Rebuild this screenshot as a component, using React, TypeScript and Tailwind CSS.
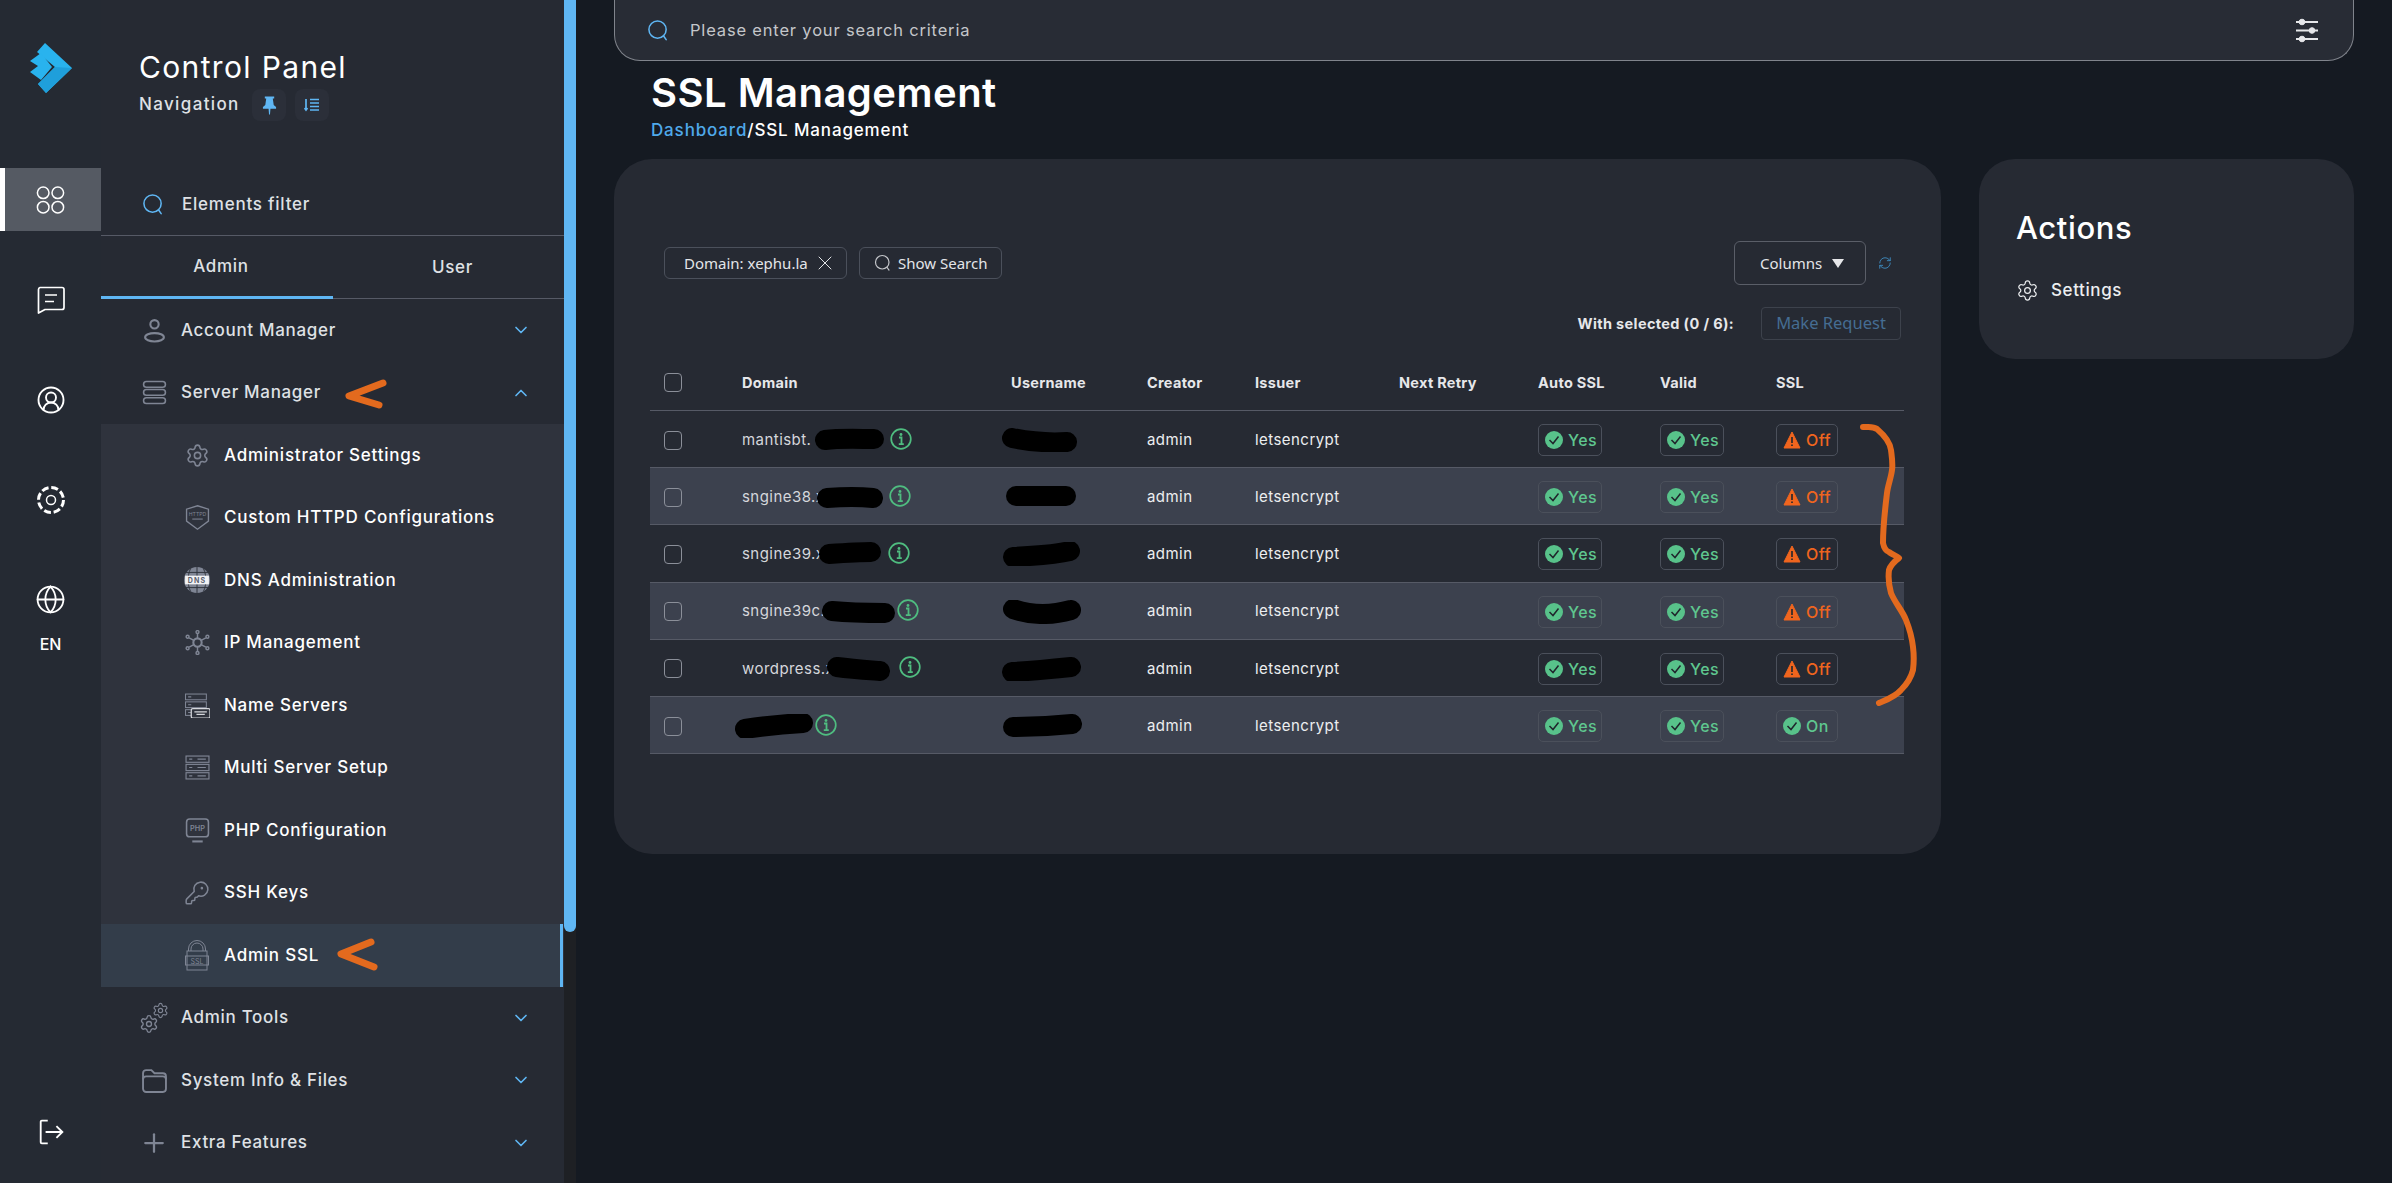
import { ChevronDown, ChevronUp, CircleUserRound, Globe, KeyRound, Plus, RefreshCw, Settings, X } from 'lucide-react'
import type { ReactNode } from 'react'

const SearchGlyph = ({ className }: { className: string }) => (
  <svg viewBox="0 0 24 24" fill="none" stroke="currentColor" strokeWidth="1.6" className={className}>
    <circle cx="11" cy="11" r="9" />
    <path d="M17.5 18l2.5 3.5" strokeLinecap="round" />
  </svg>
)

const Logo = () => (
  <svg viewBox="0 0 42 50" className="h-[50px] w-[42px]">
    <path d="M15 0L42 25L16 50L8 41L25 24L7 9z" fill="#29b3ee" />
    <path d="M25 24L42 25L39 28L16 50L8 41z" fill="#1f9fdb" />
    <path d="M0 18L11 10L22 24L11 37L0 29L8 23z" fill="#29b3ee" />
  </svg>
)

const svgProps = {
  viewBox: '0 0 24 24',
  fill: 'none',
  stroke: 'currentColor',
  strokeWidth: 1.3,
  className: 'h-[25px] w-[25px]',
}

const icons: Record<string, ReactNode> = {
  account: (
    <svg {...svgProps} strokeWidth={2}>
      <circle cx="12" cy="6" r="4" />
      <ellipse cx="12" cy="18.5" rx="9" ry="4" />
    </svg>
  ),
  server: (
    <svg {...svgProps} strokeWidth={1.5}>
      <rect x="1.5" y="1.5" width="21" height="5.5" rx="2.7" />
      <rect x="1.5" y="9.2" width="21" height="5.5" rx="2.7" />
      <rect x="1.5" y="17" width="21" height="5.5" rx="2.7" />
    </svg>
  ),
  settings: <Settings size={25} strokeWidth={1.5} />,
  shield: (
    <svg {...svgProps} className="h-[27px] w-[25px]">
      <path d="M12 0.700l10.500 3.300v11.500L12 23.300 1.500 15.500V4z" />
      <text x="12" y="11" textAnchor="middle" fontSize="5" fill="currentColor" stroke="none">HTTPD</text>
      <path d="M7 13.500h10" strokeWidth="1" />
    </svg>
  ),
  dns: (
    <svg viewBox="0 0 24 24" className="h-[26px] w-[26px]">
      <circle cx="12" cy="12" r="12" fill="#7f8594" />
      <path d="M12 0v24M0 5h24M0 19h24M6 1.500c-3 7-3 14 0 21M18 1.500c3 7 3 14 0 21" stroke="#2f333d" strokeWidth="0.9" fill="none" />
      <rect x="1" y="8" width="22" height="8" fill="#f2f3f5" />
      <text x="12" y="14.500" textAnchor="middle" fontSize="6.500" fontWeight="700" fill="#5d6270" letterSpacing="1">DNS</text>
    </svg>
  ),
  ip: (
    <svg {...svgProps} strokeWidth={1.4}>
      <circle cx="12" cy="12" r="4" strokeWidth="2" />
      <path d="M12 8V3.500M12 16v4.500M8.500 10L4 7.500M15.500 10L20 7.500M8.500 14L4 16.500M15.500 14L20 16.500" />
      <circle cx="12" cy="2" r="1.400" />
      <circle cx="12" cy="22" r="1.400" />
      <circle cx="2.500" cy="6.500" r="1.400" />
      <circle cx="21.500" cy="6.500" r="1.400" />
      <circle cx="2.500" cy="17.500" r="1.400" />
      <circle cx="21.500" cy="17.500" r="1.400" />
    </svg>
  ),
  names: (
    <svg {...svgProps} strokeWidth={1}>
      <rect x="0.500" y="1" width="20" height="5.500" />
      <rect x="0.500" y="8.500" width="20" height="5.500" />
      <rect x="0.500" y="16" width="20" height="5.500" />
      <path d="M3 3.700h3M3 11.200h3M3 18.700h3" />
      <rect x="6" y="15" width="18" height="9" rx="1.500" fill="#2f333d" stroke="#d5d7dc" strokeWidth="1.200" />
      <path d="M9 18h12M11 20.500h8" stroke="#d5d7dc" strokeWidth="1.200" />
    </svg>
  ),
  multi: (
    <svg {...svgProps} strokeWidth={1.100}>
      <rect x="1" y="1" width="22" height="6" />
      <rect x="1" y="9" width="22" height="6" />
      <rect x="1" y="17" width="22" height="6" />
      <path d="M4 4h3M4 12h3M4 20h3M12 4h8M12 12h8M12 20h8" />
    </svg>
  ),
  php: (
    <svg {...svgProps} strokeWidth={1.500}>
      <rect x="1.500" y="1" width="21" height="17" rx="3" />
      <text x="12" y="12.500" textAnchor="middle" fontSize="7" fontWeight="600" fill="currentColor" stroke="none">PHP</text>
      <path d="M7 22.500h10" strokeWidth="2" />
    </svg>
  ),
  key: <KeyRound size={26} strokeWidth={1.4} />,
  ssl: (
    <svg viewBox="0 0 24 32" fill="none" stroke="currentColor" strokeWidth="1" className="h-[32px] w-[24px]">
      <path d="M3.500 12V10a8.500 8.500 0 0117 0v2M6 12V10a6 6 0 0112 0v2" />
      <rect x="2" y="12" width="20" height="19" />
      <rect x="0.500" y="17" width="23" height="9" />
      <text x="12" y="24.500" textAnchor="middle" fontSize="7" fill="currentColor" stroke="none">SSL</text>
    </svg>
  ),
  tools: (
    <span className="relative block h-[32px] w-[30px]">
      <Settings size={17} strokeWidth={1.6} className="absolute right-0 top-0" />
      <Settings size={20} strokeWidth={1.6} className="absolute bottom-0 left-0" />
    </span>
  ),
  folder: (
    <svg {...svgProps} strokeWidth={1.800}>
      <path d="M1 20V5a3 3 0 013-3h5l3 3h8a3 3 0 013 3v12a3 3 0 01-3 3H4a3 3 0 01-3-3z" />
      <path d="M1 11a3 3 0 013-3h16a3 3 0 013 3" />
    </svg>
  ),
  plus: <Plus size={30} strokeWidth={1.800} />,
}

const subItems = [
  { label: 'Administrator Settings', icon: 'settings' },
  { label: 'Custom HTTPD Configurations', icon: 'shield' },
  { label: 'DNS Administration', icon: 'dns' },
  { label: 'IP Management', icon: 'ip' },
  { label: 'Name Servers', icon: 'names' },
  { label: 'Multi Server Setup', icon: 'multi' },
  { label: 'PHP Configuration', icon: 'php' },
  { label: 'SSH Keys', icon: 'key' },
  { label: 'Admin SSL', icon: 'ssl' },
]

const NavRow = ({ label, icon, open }: { label: string; icon: string; open?: boolean }) => (
  <div className="flex h-[62.5px] items-center pl-[38px] pr-[33px] text-[#dfe1e5]">
    <span className="flex w-[30px] shrink-0 items-center justify-center text-[#7f8594]">{icons[icon]}</span>
    <span className="ml-[12px] flex-1 text-[17px] font-medium tracking-[0.04em]">{label}</span>
    {open ? (
      <ChevronUp size={20} strokeWidth={2} className="text-[#5fb6f3]" />
    ) : (
      <ChevronDown size={20} strokeWidth={2} className="text-[#5fb6f3]" />
    )}
  </div>
)

const RailItem = ({ children }: { children: ReactNode }) => (
  <div className="mt-[37px] flex h-[63px] w-full items-center justify-center">{children}</div>
)

const Sidebar = () => (
  <>
    <div className="flex w-[101px] shrink-0 flex-col items-center bg-[#252a33] text-white">
      <div className="mt-[43px] h-[125px]">
        <Logo />
      </div>
      <div className="flex h-[63px] w-full items-center justify-center border-l-[5px] border-white bg-[#555a63] pr-[5px]">
        <svg viewBox="0 0 29 28" fill="none" stroke="currentColor" strokeWidth="1.500" className="h-[28px] w-[29px]">
          <circle cx="7.200" cy="6.800" r="5.800" />
          <circle cx="21.800" cy="6.800" r="5.800" />
          <circle cx="7.200" cy="21.200" r="5.800" />
          <circle cx="21.800" cy="21.200" r="5.800" />
        </svg>
      </div>
      <RailItem>
        <svg viewBox="0 0 28 28" fill="none" stroke="currentColor" strokeWidth="1.700" strokeLinejoin="round" className="h-[28px] w-[28px]">
          <path d="M3 1.500h22a2 2 0 012 2v18a2 2 0 01-2 2H8L1.500 27V3.500a2 2 0 011.500-2z" />
          <path d="M8 9h12M8 15.500h9" />
        </svg>
      </RailItem>
      <RailItem>
        <CircleUserRound size={30} strokeWidth={1.500} />
      </RailItem>
      <RailItem>
        <svg viewBox="0 0 30 30" fill="none" stroke="currentColor" className="h-[30px] w-[30px]">
          <circle cx="15" cy="15" r="12.500" strokeWidth="3" strokeDasharray="7 2.800" />
          <circle cx="15" cy="15" r="4.500" strokeWidth="1.500" />
        </svg>
      </RailItem>
      <div className="mt-[37px] flex h-[63px] w-full flex-col items-center justify-center">
        <Globe size={31} strokeWidth={1.400} />
      </div>
      <div className="mt-[1px] text-[16px] font-medium">EN</div>
      <div className="mt-auto mb-[38px]">
        <svg viewBox="0 0 24 24" fill="none" stroke="currentColor" strokeWidth="1.700" className="h-[26px] w-[26px]">
          <path d="M9 1.500H3.500a1 1 0 00-1 1v19a1 1 0 001 1H9" />
          <path d="M7 12h15.500M17 6.500l5.500 5.500-5.500 5.500" />
        </svg>
      </div>
    </div>

    <div className="flex w-[463px] shrink-0 flex-col overflow-hidden bg-[#262a33]">
      <div className="h-[174px] pl-[38px] pt-[46px]">
        <div className="text-[30px] leading-[42px] tracking-[0.045em] text-white">Control Panel</div>
        <div className="mt-[1px] flex items-center">
          <span className="w-[101px] whitespace-nowrap text-[17px] font-medium tracking-[0.08em] text-[#dfe1e5]">Navigation</span>
          <span className="ml-[12px] flex h-[32px] w-[34px] items-center justify-center rounded-lg bg-[#2b2f39] text-[#5fb6f3]">
            <svg viewBox="0 0 16 20" fill="currentColor" className="h-[19px] w-[15px]">
              <path d="M3 0.500h10v2h-1.500l1 7 2.500 2v2H9l-0.500 6h-1L7 13.500H1v-2l2.500-2 1-7H3z" />
            </svg>
          </span>
          <span className="ml-[9px] flex h-[32px] w-[34px] items-center justify-center rounded-lg bg-[#2b2f39] text-[#5fb6f3]">
            <svg viewBox="0 0 16 16" fill="none" stroke="currentColor" strokeWidth="1.700" className="h-[16px] w-[16px]">
              <path d="M2 2v11M0.500 11L2 13l1.500-2M6 2.500h9M6 6h9M6 9.500h9M6 13h9" />
            </svg>
          </span>
        </div>
      </div>
      <div className="flex h-[62px] shrink-0 items-center border-b border-[#565a66] pl-[41px]">
        <SearchGlyph className="h-[23px] w-[23px] text-[#5fb6f3]" />
        <span className="ml-[17px] text-[17px] font-medium tracking-[0.045em] text-[#dfe1e5]">Elements filter</span>
      </div>
      <div className="flex h-[63px] shrink-0 border-b border-[#565a66] pt-[2px] text-[17px] font-medium tracking-[0.04em] text-[#dfe1e5]">
        <div className="-mb-px flex w-[232px] items-center justify-center border-b-[3px] border-[#5fb6f3] pl-[8px]">Admin</div>
        <div className="flex flex-1 items-center justify-center pl-[8px]">User</div>
      </div>
      <NavRow label="Account Manager" icon="account" />
      <NavRow label="Server Manager" icon="server" open />
      <div className="bg-[#2f333d]">
        {subItems.map((item) => (
          <div
            key={item.label}
            className={`flex h-[62.5px] items-center pl-[81px] text-white ${
              item.icon === 'ssl' ? 'mr-[1px] border-r-[3px] border-[#5fb6f3] bg-[#333d4a]' : ''
            }`}
          >
            <span className="flex w-[30px] shrink-0 items-center justify-center text-[#7f8594]">{icons[item.icon]}</span>
            <span className="ml-[12px] text-[17px] font-medium tracking-[0.045em]">{item.label}</span>
          </div>
        ))}
      </div>
      <NavRow label="Admin Tools" icon="tools" />
      <NavRow label="System Info & Files" icon="folder" />
      <NavRow label="Extra Features" icon="plus" />
    </div>

    <div className="w-[12px] shrink-0 bg-[#1e2024]">
      <div className="h-[932px] rounded-b-[6px] bg-[#5fb6f3]" />
    </div>
  </>
)

const Scribble = ({ w, d, className }: { w: number; d: string; className?: string }) => (
  <svg width={w} height={24} viewBox={`0 0 ${w} 24`} fill="none" className={`shrink-0 ${className ?? ''}`}>
    <path d={d} stroke="#000" strokeWidth="20" strokeLinecap="round" strokeLinejoin="round" />
  </svg>
)

const InfoMark = ({ className }: { className: string }) => (
  <svg viewBox="0 0 22 22" fill="none" className={`h-[22px] w-[22px] shrink-0 ${className}`}>
    <circle cx="11" cy="11" r="9.800" stroke="#4fbd80" strokeWidth="1.700" />
    <circle cx="11" cy="6.500" r="1.400" fill="#4fbd80" />
    <path d="M9 9.500h2.500v6.500M8.800 16.200h5" stroke="#4fbd80" strokeWidth="1.800" />
  </svg>
)

const rows = [
  { text: 'mantisbt.', textW: 'w-[73px]', w: 69, d: 'M10 12C25 10 45 11 59 11', info: 'ml-[6px]', userW: 75, userD: 'M10 10C30 14 50 15 65 14', userClass: 'ml-[-9px]' },
  { text: 'sngine38.x', textW: 'w-[75px]', w: 66, d: 'M10 13C25 12 45 12 56 13', info: 'ml-[6px]', userW: 70, userD: 'M10 11C30 11 45 11 60 11', userClass: 'ml-[-5px]' },
  { text: 'sngine39.x', textW: 'w-[77px]', w: 62, d: 'M10 12C25 11 40 10 52 10', info: 'ml-[7px]', userW: 77, userD: 'M10 15C30 14 50 13 67 9', userClass: 'ml-[-8px]' },
  { text: 'sngine39c.x', textW: 'w-[80px]', w: 73, d: 'M10 11C30 13 50 13 63 13', info: 'ml-[2px]', userW: 78, userD: 'M10 9C30 16 50 15 68 10', userClass: 'ml-[-8px]' },
  { text: 'wordpress.x', textW: 'w-[85px]', w: 63, d: 'M10 10C25 12 40 13 53 14', info: 'ml-[9px]', userW: 79, userD: 'M10 15C30 14 50 12 69 10', userClass: 'ml-[-9px]' },
  { text: '', textW: 'w-[0px] -ml-[7px]', w: 78, d: 'M10 15C30 12 50 10 68 9', info: 'ml-[2px]', userW: 79, userD: 'M10 13C30 13 50 12 69 10', userClass: 'ml-[-8px]' },
]

const grid = 'grid grid-cols-[92px_269px_136px_108px_144px_139px_122px_116px_1fr] items-center'

const CheckBox = () => (
  <span className="ml-[14px] block h-[19px] w-[18px] rounded-[4px] border border-[#8b8f99]" />
)

const Badge = ({ label, on = true, wide = true }: { label: string; on?: boolean; wide?: boolean }) => (
  <span
    className={`flex h-[32px] items-center rounded-[5px] border border-[#4b505b] pl-[6px] text-[16px] font-medium ${
      wide ? 'w-[64px]' : 'w-[62px]'
    } ${on ? 'text-[#5fc78f]' : 'text-[#f0651e]'}`}
  >
    {on ? (
      <svg viewBox="0 0 18 18" className="h-[18px] w-[18px] shrink-0">
        <circle cx="9" cy="9" r="9" fill="#58c28a" />
        <path d="M4.500 9l3.500 3.500 5.500-7" fill="none" stroke="#20252c" strokeWidth="1.500" />
      </svg>
    ) : (
      <svg viewBox="0 0 18 18" className="h-[18px] w-[18px] shrink-0">
        <path d="M9 1L17 17H1z" fill="#f0651e" stroke="#f0651e" strokeLinejoin="round" />
        <path d="M9 6v6M9 13.500v1.500" stroke="#20252c" strokeWidth="1.600" />
      </svg>
    )}
    <span className="ml-[5px]">{label}</span>
  </span>
)

const SslTable = () => (
  <div className="ml-[36px] w-[1254px]">
    <div className={`${grid} h-[56px] border-b border-[#565a66] text-[14.500px] font-bold tracking-[0.02em] text-[#e6e7ea]`}>
      <CheckBox />
      <div>Domain</div>
      <div>Username</div>
      <div>Creator</div>
      <div>Issuer</div>
      <div>Next Retry</div>
      <div>Auto SSL</div>
      <div>Valid</div>
      <div>SSL</div>
    </div>
    {rows.map((row, i) => (
      <div
        key={i}
        className={`${grid} h-[57.2px] border-b border-[#565a66] pt-[2px] text-[15px] tracking-[0.03em] ${
          i % 2 === 1 ? 'bg-[#3c414e]' : ''
        }`}
      >
        <CheckBox />
        <div className="flex items-center text-[#d5d7dc]">
          <span className={`${row.textW} shrink-0 whitespace-nowrap`}>{row.text}</span>
          <Scribble w={row.w} d={row.d} />
          <InfoMark className={`${row.info} mb-[3px]`} />
        </div>
        <div>
          <Scribble w={row.userW} d={row.userD} className={row.userClass} />
        </div>
        <div className="text-[#eceef0]">admin</div>
        <div className="text-[#eceef0]">letsencrypt</div>
        <div />
        <Badge label="Yes" />
        <Badge label="Yes" />
        {i === 5 ? <Badge label="On" wide={false} /> : <Badge label="Off" on={false} wide={false} />}
      </div>
    ))}
  </div>
)

const Annotations = () => (
  <svg
    width="2392"
    height="1183"
    viewBox="0 0 2392 1183"
    fill="none"
    stroke="#e36a1e"
    strokeLinecap="round"
    strokeLinejoin="round"
    className="pointer-events-none absolute left-0 top-0"
  >
    <path d="M383 383L349 396L379 405" strokeWidth="7" />
    <path d="M371 942L341 954L374 967" strokeWidth="7" />
    <path
      d="M1863 427C1870 427 1873 426 1877 429C1884 435 1890 442 1891 450C1892 458 1893 464 1892 470C1891 478 1888 485 1887 493C1885 510 1883 525 1883 543C1884 548 1886 551 1889 552C1893 555 1897 556 1899 558C1895 561 1891 564 1889 570C1888 578 1889 586 1891 593C1895 603 1902 610 1906 620C1910 630 1912 638 1913 647C1914 655 1914 662 1913 670C1911 678 1906 685 1901 690C1895 697 1886 700 1879 703"
      strokeWidth="6"
    />
  </svg>
)

export default function App() {
  return (
    <div className="relative flex h-[1183px] w-[2392px] overflow-hidden bg-[#151a22] font-[family-name:Inter,sans-serif]">
      <Sidebar />

      <main className="ml-[38px] w-[1740px] shrink-0">
        <div className="flex h-[61px] items-center rounded-b-[26px] border border-t-0 border-[#80848c] bg-[#282c35] pl-[32px] pr-[34px]">
          <SearchGlyph className="h-[23px] w-[23px] text-[#5fb6f3]" />
          <span className="ml-[20px] flex-1 text-[16.500px] tracking-[0.05em] text-[#c4c6ca]">Please enter your search criteria</span>
          <svg viewBox="0 0 24 25" fill="#e6e7ea" stroke="#e6e7ea" className="h-[25px] w-[24px]">
            <path d="M1 4h22M1 12.500h22M1 21h22" strokeWidth="2" />
            <circle cx="7" cy="4" r="2.800" />
            <circle cx="17" cy="12.500" r="2.800" />
            <circle cx="7" cy="21" r="2.800" />
          </svg>
        </div>

        <div className="pl-[37px] pt-[8px]">
          <h1 className="h-[48px] text-[40px] font-semibold leading-[48px] tracking-[0.012em] text-white">SSL Management</h1>
          <div className="mt-[1px] h-[24px] text-[17px] font-medium leading-[24px] tracking-[0.05em] text-white">
            <span className="text-[#4fa9ea]">Dashboard</span>/SSL Management
          </div>
        </div>

        <div className="mt-[17px] flex items-start gap-[38px]">
          <section className="h-[695px] w-[1327px] shrink-0 rounded-[38px] bg-[#262a33] pt-[82px]">
            <div className="ml-[50px] mr-[49px] flex h-[44px] items-center">
              <div className="flex h-[32px] w-[183px] items-center rounded-[6px] border border-[#4b505b] pl-[19px] font-[family-name:'Noto_Sans',sans-serif] text-[15px] text-[#e3e5e8]">
                Domain: xephu.la
                <X size={24} strokeWidth={1} className="ml-[5px]" />
              </div>
              <div className="ml-[12px] flex h-[32px] w-[143px] items-center rounded-[6px] border border-[#4b505b] pl-[14px] font-[family-name:'Noto_Sans',sans-serif] text-[15px] text-[#e3e5e8]">
                <SearchGlyph className="h-[18px] w-[18px] text-[#c4c6ca]" />
                <span className="ml-[6px]">Show Search</span>
              </div>
              <div className="ml-auto flex h-[44px] w-[132px] items-center rounded-[6px] border border-[#5a5e68] pl-[25px] font-[family-name:'Noto_Sans',sans-serif] text-[15px] text-[#e3e5e8]">
                Columns
                <svg viewBox="0 0 12 9" className="ml-[10px] h-[9px] w-[12px]">
                  <path d="M0 0h12L6 9z" fill="#e6e7ea" />
                </svg>
              </div>
              <RefreshCw size={14} strokeWidth={1.500} className="ml-[12px] text-[#3f8fc6]" />
            </div>
            <div className="mr-[40px] mt-[22px] flex h-[33px] items-center justify-end">
              <span className="text-[14.500px] font-bold tracking-[0.025em] text-[#e6e7ea]">With selected (0 / 6):</span>
              <span className="ml-[27px] flex h-[33px] w-[140px] items-center justify-center rounded-[4px] border border-[#3d424c] font-[family-name:'Noto_Sans',sans-serif] text-[16.500px] text-[#456d92]">
                Make Request
              </span>
            </div>
            <div className="mt-[15px]">
              <SslTable />
            </div>
          </section>

          <aside className="h-[200px] w-[375px] shrink-0 rounded-[36px] bg-[#262a33] pl-[37px] pt-[48px]">
            <h2 className="text-[31px] font-medium leading-[42px] tracking-[0.02em] text-white">Actions</h2>
            <div className="mt-[29px] flex items-center text-[#eceef0]">
              <Settings size={23} strokeWidth={1.300} />
              <span className="ml-[12px] text-[17px] font-medium tracking-[0.035em]">Settings</span>
            </div>
          </aside>
        </div>
      </main>

      <Annotations />
    </div>
  )
}
